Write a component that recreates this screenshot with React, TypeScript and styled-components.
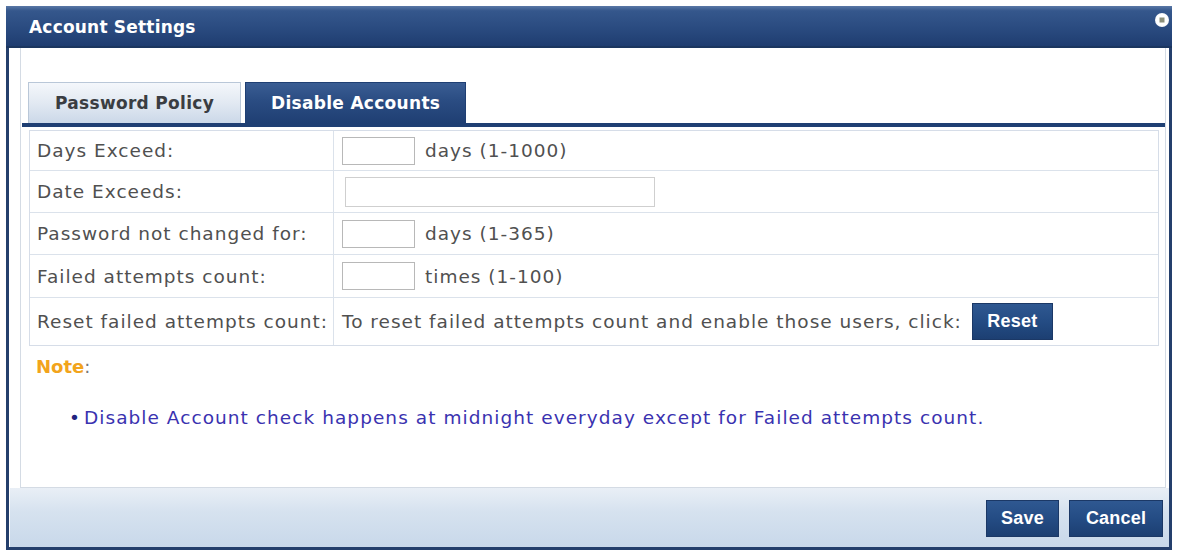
import styled, { createGlobalStyle } from "styled-components";

const GlobalStyle = createGlobalStyle`
  body {
    margin: 0;
    background: #ffffff;
    font-family: "DejaVu Sans", Verdana, sans-serif;
  }
`;

const Dialog = styled.div`
  margin: 6px 0 0 6px;
  width: 1166px;
  height: 544px;
  box-sizing: border-box;
  border: 3px solid #243f6c;
  border-top: none;
  display: flex;
  flex-direction: column;
  background: #ffffff;
`;

const TitleBar = styled.div`
  height: 42px;
  margin: 0 -3px;
  box-sizing: border-box;
  padding: 0 3px 0 23px;
  display: flex;
  align-items: center;
  justify-content: space-between;
  background: linear-gradient(#5a78a6 0%, #35578c 12%, #2a4b80 55%, #1f3d70 100%);
  border-bottom: 2px solid #1b365f;
`;

const Title = styled.span`
  color: #ffffff;
  font-size: 17px;
  font-weight: bold;
  letter-spacing: 0.2px;
  margin-top: 2px;
`;

const CloseButton = styled.button`
  width: 14px;
  height: 14px;
  padding: 0;
  margin-top: -13px;
  border: none;
  border-radius: 50%;
  background: radial-gradient(circle, #ffffff 55%, #dfe6ef 100%);
  display: flex;
  align-items: center;
  justify-content: center;
  cursor: pointer;
`;

const Body = styled.div`
  flex: 1;
  display: flex;
  flex-direction: column;
  border-left: 1px solid #ffffff;
`;

const Panel = styled.div`
  height: 440px;
  box-sizing: border-box;
  margin: 0 3px 0 10px;
  border: 1px solid #d4dbe4;
  border-top: none;
  padding-top: 34px;
`;

const TabList = styled.div`
  display: flex;
  gap: 4px;
  padding-left: 6px;
  margin-left: 1px;
  border-bottom: 4px solid #1f3f73;
`;

const Tab = styled.div<{ $active?: boolean }>`
  height: 41px;
  box-sizing: border-box;
  padding: 0 ${(p) => (p.$active ? "25px" : "26px")};
  display: flex;
  align-items: center;
  font-size: 17px;
  font-weight: bold;
  letter-spacing: 0.3px;
  border: 1px solid ${(p) => (p.$active ? "#1f3f73" : "#b9c7d8")};
  border-bottom: none;
  color: ${(p) => (p.$active ? "#ffffff" : "#3a3d42")};
  background: ${(p) =>
    p.$active
      ? "linear-gradient(#3a5d93 0%, #2a4c82 45%, #1f3f73 100%)"
      : "linear-gradient(#f4f7fb 0%, #e2e9f2 50%, #cbd8e8 100%)"};
`;

const TabBody = styled.div`
  padding: 3px 6px 0 8px;
`;

const Table = styled.div`
  border: 1px solid #d6dde8;
  display: flex;
  flex-direction: column;
`;

const Row = styled.div<{ $height: number }>`
  display: grid;
  grid-template-columns: 304px 1fr;
  height: ${(p) => p.$height}px;
  border-top: 1px solid #dbe2eb;
  &:first-child {
    border-top: none;
  }
`;

const Label = styled.div`
  display: flex;
  align-items: center;
  padding-left: 7px;
  border-right: 1px solid #dbe2eb;
  color: #505050;
  font-size: 18.5px;
  letter-spacing: 1px;
  white-space: nowrap;
`;

const Value = styled.div`
  display: flex;
  align-items: center;
  gap: 10px;
  padding-left: 8px;
  color: #505050;
  font-size: 18.5px;
  letter-spacing: 1px;
  white-space: nowrap;
`;

const TextInput = styled.input<{ $width: number; $offset?: number }>`
  width: ${(p) => p.$width}px;
  height: ${(p) => (p.$offset ? 30 : 28)}px;
  margin-left: ${(p) => p.$offset ?? 0}px;
  box-sizing: border-box;
  border: 1px solid ${(p) => (p.$offset ? "#cfcfcf" : "#b8b8b8")};
  background: #ffffff;
  padding: 0 4px;
  font-family: inherit;
  font-size: 15px;
`;

const NavyButton = styled.button<{ $width: number }>`
  width: ${(p) => p.$width}px;
  height: 37px;
  border: 1px solid #1b3866;
  background: linear-gradient(#2f5891 0%, #244c84 50%, #1c3f72 100%);
  color: #ffffff;
  font-family: "Liberation Sans", Arial, sans-serif;
  font-weight: bold;
  font-size: 18px;
  letter-spacing: 0.2px;
  padding: 0;
  cursor: pointer;
`;

const NoteHead = styled.div`
  margin: 10px 0 0 7px;
  font-size: 18px;
  font-weight: bold;
  color: #f2a41c;
  span {
    color: #777777;
    font-weight: normal;
  }
`;

const NoteList = styled.ul`
  margin: 30px 0 0;
  padding-left: 40px;
  list-style: none;
  li {
    color: #3a32b0;
    font-size: 18.5px;
    letter-spacing: 1.05px;
    white-space: nowrap;
  }
  li::before {
    content: "•";
    color: #22237f;
    margin-right: 3px;
  }
`;

const Footer = styled.div`
  flex: 1;
  display: flex;
  justify-content: flex-end;
  align-items: flex-start;
  gap: 10px;
  padding: 12px 6px 0 0;
  background: linear-gradient(#e9eff6 0%, #d6e2ef 40%, #c8d8ea 100%);
`;

const rows = [
  { label: "Days Exceed:", height: 39, width: 73, unit: "days (1-1000)" },
  { label: "Date Exceeds:", height: 41, width: 310, offset: 3 },
  { label: "Password not changed for:", height: 41, width: 73, unit: "days (1-365)" },
  { label: "Failed attempts count:", height: 42, width: 73, unit: "times (1-100)" },
];

function App() {
  return (
    <>
      <GlobalStyle />
      <Dialog>
        <TitleBar>
          <Title>Account Settings</Title>
          <CloseButton aria-label="close">
            <svg width="6" height="6" viewBox="0 0 6 6">
              <rect x="0.5" y="0.5" width="5" height="5" fill="#8b8f7a" />
            </svg>
          </CloseButton>
        </TitleBar>
        <Body>
          <Panel>
            <TabList>
              <Tab>Password Policy</Tab>
              <Tab $active>Disable Accounts</Tab>
            </TabList>
            <TabBody>
              <Table>
                {rows.map((r) => (
                  <Row key={r.label} $height={r.height}>
                    <Label>{r.label}</Label>
                    <Value>
                      <TextInput $width={r.width} $offset={r.offset} />
                      {r.unit && <span>{r.unit}</span>}
                    </Value>
                  </Row>
                ))}
                <Row $height={47}>
                  <Label>Reset failed attempts count:</Label>
                  <Value>
                    <span>To reset failed attempts count and enable those users, click:</span>
                    <NavyButton $width={81}>Reset</NavyButton>
                  </Value>
                </Row>
              </Table>
              <NoteHead>
                Note<span>:</span>
              </NoteHead>
              <NoteList>
                <li>Disable Account check happens at midnight everyday except for Failed attempts count.</li>
              </NoteList>
            </TabBody>
          </Panel>
          <Footer>
            <NavyButton $width={73}>Save</NavyButton>
            <NavyButton $width={94}>Cancel</NavyButton>
          </Footer>
        </Body>
      </Dialog>
    </>
  );
}

export default App;
